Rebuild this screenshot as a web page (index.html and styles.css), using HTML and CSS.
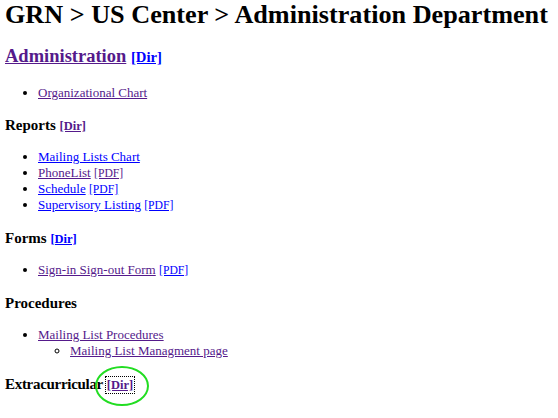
FILE: index.html
```html
<!DOCTYPE html>
<html lang="en">
<head>
    <meta charset="UTF-8">
    <title>Administration Department</title>
    <link rel="stylesheet" href="styles.css">
</head>
<body>
    <h1>GRN &gt; US Center &gt; Administration Department</h1>

    <h2><a class="seen" href="#">Administration</a> <a class="dir" href="#">[Dir]</a></h2>
    <ul>
        <li><a class="seen" href="#">Organizational Chart</a></li>
    </ul>

    <h3>Reports <a class="dir seen" href="#">[Dir]</a></h3>
    <ul>
        <li><a href="#">Mailing Lists Chart</a></li>
        <li><a class="seen" href="#">PhoneList</a> <a class="pdf seen" href="#">[PDF]</a></li>
        <li><a href="#">Schedule</a> <a class="pdf" href="#">[PDF]</a></li>
        <li><a href="#">Supervisory Listing</a> <a class="pdf" href="#">[PDF]</a></li>
    </ul>

    <h3 class="nudge">Forms <a class="dir" href="#">[Dir]</a></h3>
    <ul>
        <li><a class="seen" href="#">Sign-in Sign-out Form</a> <a class="pdf" href="#">[PDF]</a></li>
    </ul>

    <h3 class="nudge">Procedures</h3>
    <ul>
        <li><a class="seen" href="#">Mailing List Procedures</a>
            <ul>
                <li><a class="seen" href="#">Mailing List Managment page</a></li>
            </ul>
        </li>
    </ul>

    <h3 class="extra"><span class="tight">Extracurricular</span> <span class="marked"><a class="dir seen focused" href="#">[Dir]</a><span class="ring"></span></span></h3>
</body>
</html>
```

FILE: styles.css
```css
body {
    margin: 0 5px;
    font-family: "Liberation Serif", "Times New Roman", serif;
    color: #000;
    background-color: #fff;
}

a {
    color: #0000ff;
}

a.seen {
    color: #551a8b;
}

h1 {
    margin: 0;
    font-size: 26.2px;
    line-height: 29.5px;
    font-weight: bold;
    white-space: nowrap;
}

h2 {
    margin: 15.5px 0 18px;
    font-size: 18.5px;
    line-height: 22px;
}

h3 {
    margin: 14px 0;
    font-size: 15px;
    line-height: 20px;
}

h3.nudge {
    margin: 15px 0 13px;
}

h3.extra {
    margin-top: 15px;
}

.dir {
    font-size: 12.5px;
    line-height: 1;
}

h2 .dir {
    font-size: 14.7px;
}

.tight {
    letter-spacing: -0.3px;
}

ul {
    margin: 14px 0;
    padding-left: 33px;
    font-size: 13px;
    line-height: 16px;
}

ul ul {
    margin: 0;
    padding-left: 32px;
    list-style-type: circle;
}

.pdf {
    font-size: 11.7px;
    line-height: 1;
}

.marked {
    position: relative;
}

.focused {
    outline: 1px dotted #000;
    outline-offset: 1px;
}

.ring {
    position: absolute;
    left: -12px;
    top: -10px;
    width: 54px;
    height: 40px;
    box-sizing: border-box;
    border: 2.5px solid #22dd22;
    border-radius: 50%;
}
```
